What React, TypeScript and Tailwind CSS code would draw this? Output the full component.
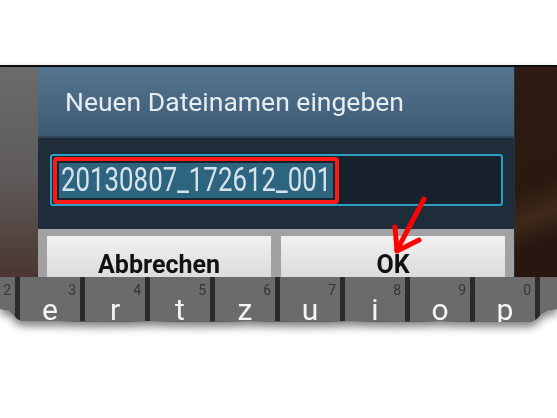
import React from "react";

const keys: { l: string; n: string }[] = [
  { l: "w", n: "2" },
  { l: "e", n: "3" },
  { l: "r", n: "4" },
  { l: "t", n: "5" },
  { l: "z", n: "6" },
  { l: "u", n: "7" },
  { l: "i", n: "8" },
  { l: "o", n: "9" },
  { l: "p", n: "0" },
  { l: "ü", n: "" },
];

export default function App() {
  return (
    <div className="relative w-[557px] h-[418px] bg-white overflow-hidden font-['Roboto','Liberation_Sans',sans-serif]">
      <div className="h-[65px]" />
      <div className="[filter:drop-shadow(0_5px_4px_rgba(0,0,0,0.5))]">
        <div className="h-[260px] flex flex-col [clip-path:polygon(0_0,557px_0,557px_244px,548px_245px,542px_248px,537px_254px,530px_257px,480px_257px,440px_256px,400px_257px,350px_256px,300px_257px,250px_256px,200px_257px,150px_256px,100px_257px,60px_256px,22px_256px,17px_254px,13px_249px,9px_245px,0_244px)]">
          <div className="h-[2px] bg-[#0d0d0d]" />
          <div className="flex h-[210px] overflow-hidden">
            <div className="w-[38px] bg-gradient-to-b from-[#6b6b6b] via-[#5f5c5b] to-[#4a3632]" />
            <div className="w-[477px] flex flex-col border-r border-[#24303a]">
              <div className="h-[72px] flex items-center pl-[27px] pt-[1px] bg-gradient-to-b from-[#55758f] to-[#3d5a74] border-b-2 border-[#33475a]">
                <span className="text-[26.5px] leading-none text-[#e6edf1]">Neuen Dateinamen eingeben</span>
              </div>
              <div className="h-[93px] bg-[#1f2c39] pt-[16px] pl-[12px] pr-[11px]">
                <div className="h-[52px] rounded-[3px] border-2 border-[#2b9fc7] bg-[#17222c] p-[1px]">
                  <div className="w-[286px] h-[47px] rounded-[4px] border-4 border-[#ff1a1a] bg-[#17222c] p-[2px]">
                    <div className="h-full w-full bg-[#2d6480] flex items-center">
                      <span className="block w-[268px] shrink-0 whitespace-nowrap pl-[2px]">
                        <span className="inline-block origin-left scale-x-[0.76] text-[34px] leading-none text-[#d6e3ea]">
                          20130807_172612_001
                        </span>
                      </span>
                    </div>
                  </div>
                </div>
              </div>
              <div className="flex-1 bg-[#a1a1a1] flex gap-[10px] pt-[7px] pl-[9px] pr-[9px]">
                <div className="flex-1 bg-gradient-to-b from-[#f1f1f1] to-[#dcdcdc] flex justify-center pt-[16px]">
                  <span className="text-[25px] leading-none font-bold text-[#111]">Abbrechen</span>
                </div>
                <div className="flex-1 bg-gradient-to-b from-[#f1f1f1] to-[#dcdcdc] flex justify-center pt-[16px]">
                  <span className="text-[25px] leading-none font-bold text-[#111]">OK</span>
                </div>
              </div>
            </div>
            <div className="flex-1 bg-[linear-gradient(160deg,#2e1c14_0%,#2a1911_55%,#3f2919_70%,#281710_82%)]" />
          </div>
          <div className="h-[48px] bg-[#2b2b2b] flex gap-[5px] ml-[-45px]">
            {keys.map((k) => (
              <div key={k.l} className="relative w-[60px] shrink-0 bg-[#6b6b6b] text-center">
                <span className="absolute top-[6px] right-[4px] text-[14px] leading-none text-[#363636]">{k.n}</span>
                <div className="pt-[18px] text-[30px] leading-none text-[#f5f5f5]">{k.l}</div>
              </div>
            ))}
          </div>
        </div>
      </div>
      <svg className="absolute left-0 top-0" width="557" height="418" viewBox="0 0 557 418">
        <path d="M424 199 L397 250" stroke="#ff0000" strokeWidth="5" strokeLinecap="round" fill="none" />
        <path d="M395 227 L397 251 L419 240" stroke="#ff0000" strokeWidth="5" strokeLinecap="round" strokeLinejoin="round" fill="none" />
      </svg>
    </div>
  );
}
